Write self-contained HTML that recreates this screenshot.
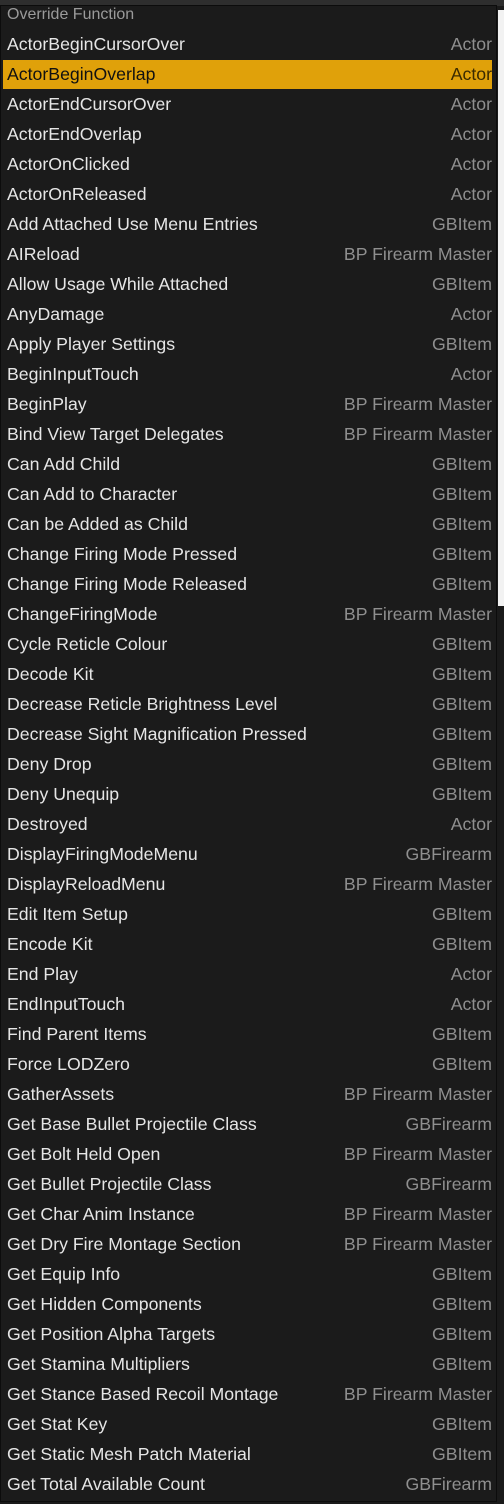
<!DOCTYPE html>
<html><head><meta charset="utf-8"><style>
body{margin:0;width:504px;height:1504px;background:#1a1a1a;overflow:hidden;font-family:"Liberation Sans",sans-serif;position:relative}
.top{position:absolute;left:0;top:0;width:504px;height:6px;background:#2e2e2e}
.menu{position:absolute;left:0;top:5px;width:497px;height:1497px;background:#1b1b1b;border:1px solid #0c0c0c;box-sizing:border-box}
.strip{position:absolute;left:498px;top:10px;width:6px;height:596px;background:#f2f2f2}
.hdr{position:absolute;left:7px;top:6px;font-size:16px;color:#9a9a9a}
.r{position:absolute;left:3px;width:489px;height:29px;line-height:29px;font-size:17.7px;color:#e6e6e6}
.r span{position:absolute;left:4px}
.r b{position:absolute;right:0;font-weight:normal;color:#8f8f8f}
.r.sel{background:#e0a10a;color:#111}
.r.sel b{color:#3a2a00}
</style></head><body>
<div class="top"></div>
<div class="menu"></div>
<div class="strip"></div>
<div class="hdr">Override Function</div>
<div id="list"></div>
<script>
var d=[["ActorBeginCursorOver","Actor"],["ActorBeginOverlap","Actor"],["ActorEndCursorOver","Actor"],["ActorEndOverlap","Actor"],["ActorOnClicked","Actor"],["ActorOnReleased","Actor"],["Add Attached Use Menu Entries","GBItem"],["AIReload","BP Firearm Master"],["Allow Usage While Attached","GBItem"],["AnyDamage","Actor"],["Apply Player Settings","GBItem"],["BeginInputTouch","Actor"],["BeginPlay","BP Firearm Master"],["Bind View Target Delegates","BP Firearm Master"],["Can Add Child","GBItem"],["Can Add to Character","GBItem"],["Can be Added as Child","GBItem"],["Change Firing Mode Pressed","GBItem"],["Change Firing Mode Released","GBItem"],["ChangeFiringMode","BP Firearm Master"],["Cycle Reticle Colour","GBItem"],["Decode Kit","GBItem"],["Decrease Reticle Brightness Level","GBItem"],["Decrease Sight Magnification Pressed","GBItem"],["Deny Drop","GBItem"],["Deny Unequip","GBItem"],["Destroyed","Actor"],["DisplayFiringModeMenu","GBFirearm"],["DisplayReloadMenu","BP Firearm Master"],["Edit Item Setup","GBItem"],["Encode Kit","GBItem"],["End Play","Actor"],["EndInputTouch","Actor"],["Find Parent Items","GBItem"],["Force LODZero","GBItem"],["GatherAssets","BP Firearm Master"],["Get Base Bullet Projectile Class","GBFirearm"],["Get Bolt Held Open","BP Firearm Master"],["Get Bullet Projectile Class","GBFirearm"],["Get Char Anim Instance","BP Firearm Master"],["Get Dry Fire Montage Section","BP Firearm Master"],["Get Equip Info","GBItem"],["Get Hidden Components","GBItem"],["Get Position Alpha Targets","GBItem"],["Get Stamina Multipliers","GBItem"],["Get Stance Based Recoil Montage","BP Firearm Master"],["Get Stat Key","GBItem"],["Get Static Mesh Patch Material","GBItem"],["Get Total Available Count","GBFirearm"]];
var h="";d.forEach(function(e,i){h+='<div class="r'+(i==1?' sel':'')+'" style="top:'+(30+30*i)+'px"><span>'+e[0]+'</span><b>'+e[1]+'</b></div>';});
document.getElementById("list").innerHTML=h;
</script>
</body></html>
